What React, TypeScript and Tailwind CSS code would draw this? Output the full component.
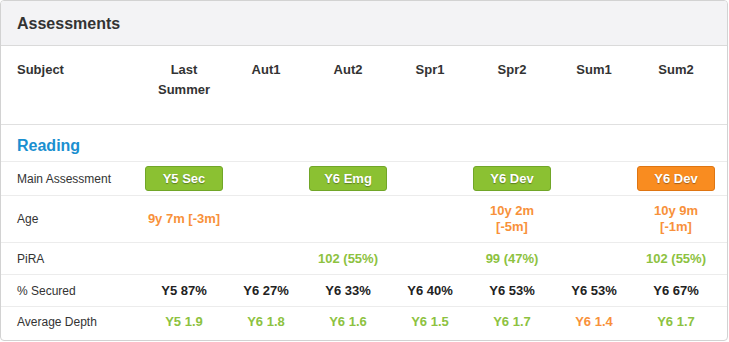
const terms = ["Last Summer", "Aut1", "Aut2", "Spr1", "Spr2", "Sum1", "Sum2"];

type Cell = { text: string; tone?: "green" | "orange" | "dark"; badge?: boolean } | null;

const rows: { label: string; cells: Cell[]; cls: string }[] = [
  {
    label: "Main Assessment",
    cls: "py-1",
    cells: [
      { text: "Y5 Sec", tone: "green", badge: true },
      null,
      { text: "Y6 Emg", tone: "green", badge: true },
      null,
      { text: "Y6 Dev", tone: "green", badge: true },
      null,
      { text: "Y6 Dev", tone: "orange", badge: true },
    ],
  },
  {
    label: "Age",
    cls: "py-[7px]",
    cells: [
      { text: "9y 7m [-3m]", tone: "orange" },
      null,
      null,
      null,
      { text: "10y 2m [-5m]", tone: "orange" },
      null,
      { text: "10y 9m [-1m]", tone: "orange" },
    ],
  },
  {
    label: "PiRA",
    cls: "pt-2 pb-[7px]",
    cells: [
      null,
      null,
      { text: "102 (55%)", tone: "green" },
      null,
      { text: "99 (47%)", tone: "green" },
      null,
      { text: "102 (55%)", tone: "green" },
    ],
  },
  {
    label: "% Secured",
    cls: "pt-2 pb-[7px]",
    cells: ["Y5 87%", "Y6 27%", "Y6 33%", "Y6 40%", "Y6 53%", "Y6 53%", "Y6 67%"].map((t) => ({
      text: t,
      tone: "dark" as const,
    })),
  },
  {
    label: "Average Depth",
    cls: "pt-[7px] pb-2",
    cells: [
      { text: "Y5 1.9", tone: "green" },
      { text: "Y6 1.8", tone: "green" },
      { text: "Y6 1.6", tone: "green" },
      { text: "Y6 1.5", tone: "green" },
      { text: "Y6 1.7", tone: "green" },
      { text: "Y6 1.4", tone: "orange" },
      { text: "Y6 1.7", tone: "green" },
    ],
  },
];

const grid = "grid grid-cols-[142px_repeat(7,82px)_1fr]";

function Value({ cell }: { cell: Cell }) {
  if (!cell) return <div />;
  if (cell.badge) {
    const color =
      cell.tone === "orange"
        ? "bg-[#f98c20] border-[#df7512]"
        : "bg-[#8bc132] border-[#71a628]";
    return (
      <div className="px-[2px] flex justify-center">
        <div
          className={`w-[78px] h-[25px] rounded-[3px] border ${color} flex items-center justify-center text-white font-bold text-[13px] [text-shadow:0_1px_1px_rgba(0,0,0,0.35)]`}
        >
          {cell.text}
        </div>
      </div>
    );
  }
  const color =
    cell.tone === "orange" ? "text-[#f8913a]" : cell.tone === "green" ? "text-[#8dc23f]" : "text-[#222]";
  return <div className={`px-1 text-center font-bold text-[13px] leading-4 ${color}`}>{cell.text}</div>;
}

export default function App() {
  return (
    <div className="w-[729px] h-[342px] bg-white font-['Liberation_Sans',Arial,sans-serif]">
      <div className="w-[728px] h-[341px] border border-[#d2d2d2] rounded-[4px] overflow-hidden">
        <div className="h-[45px] pt-px bg-[#f3f3f5] border-b border-[#dadada] flex items-center px-4">
          <h2 className="text-[16px] font-bold text-[#333]">Assessments</h2>
        </div>

        <div className={`${grid} pt-[14px] pb-6 border-b border-[#e0e0e0] text-[13px] font-bold text-[#333] leading-5`}>
          <div className="pl-4">Subject</div>
          {terms.map((t) => (
            <div key={t} className="px-1 text-center">
              {t}
            </div>
          ))}
          <div />
        </div>

        <div className="pl-4 pt-[11px] pb-[5px] border-b border-[#ececec] text-[16px] leading-5 font-bold text-[#1a8fd0]">
          Reading
        </div>

        {rows.map((r, i) => (
          <div
            key={r.label}
            className={`${grid} items-center ${r.cls} ${i < rows.length - 1 ? "border-b border-[#ececec]" : ""}`}
          >
            <div className="pl-4 text-[12px] leading-4 text-[#333]">{r.label}</div>
            {r.cells.map((c, j) => (
              <Value key={j} cell={c} />
            ))}
            <div />
          </div>
        ))}
      </div>
    </div>
  );
}
